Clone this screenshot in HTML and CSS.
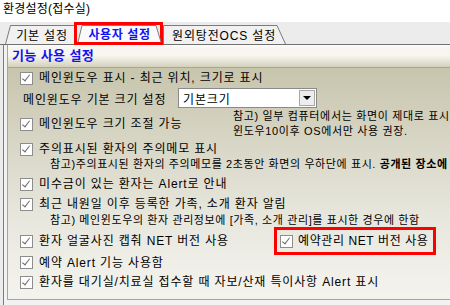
FILE: index.html
```html
<!DOCTYPE html>
<html lang="ko">
<head>
    <meta charset="UTF-8">
    <meta name="viewport" content="width=device-width, initial-scale=1.0">
    <title>환경설정(접수실)</title>
    <link rel="stylesheet" href="styles.css">
</head>
<body>
<div class="title">환경설정(접수실)</div>

<div class="tabs">
    <div class="tab tab-first">
        <svg class="tab-shape" viewBox="0 0 72 19" preserveAspectRatio="none"><path d="M0.5 19 L5.5 0.5 L72 0.5 L72 19"/></svg>
        <span>기본 설정</span>
    </div>
    <div class="tab-mark">
        <div class="tab tab-active">
            <svg class="tab-shape" viewBox="0 0 83 17" preserveAspectRatio="none"><path d="M1 17 L5 0.5 L79 0.5 L84 17"/></svg>
            <span>사용자 설정</span>
        </div>
    </div>
    <div class="tab tab-last">
        <svg class="tab-shape" viewBox="0 0 123 19" preserveAspectRatio="none"><path d="M0.5 19 L0.5 0.5 L114 0.5 L122.5 19"/></svg>
        <span>원외탕전OCS 설정</span>
    </div>
</div>

<div class="page">
    <div class="pane">
        <div class="group">
            <div class="group-head">기능 사용 설정</div>
            <div class="group-body">
                <div class="row r1"><span class="check"></span><span>메인윈도우 표시 - 최근 위치, 크기로 표시</span></div>

                <div class="size-row">
                    <span class="size-label">메인윈도우 기본 크기 설정</span>
                    <div class="select"><span class="select-text">기본크기</span><span class="select-btn"></span></div>
                </div>

                <div class="split-row r3">
                    <div class="row"><span class="check"></span><span>메인윈도우 크기 조절 가능</span></div>
                    <div class="side-note">참고) 일부 컴퓨터에서는 화면이 제대로 표시<br>윈도우10이후 OS에서만 사용 권장.</div>
                </div>

                <div class="row r4"><span class="check"></span><span>주의표시된 환자의 주의메모 표시</span></div>
                <div class="note">참고)주의표시된 환자의 주의메모를 2초동안 화면의 우하단에 표시. <b>공개된 장소에</b></div>

                <div class="row r6"><span class="check"></span><span>미수금이 있는 환자는 Alert로 안내</span></div>
                <div class="row"><span class="check"></span><span>최근 내원일 이후 등록한 가족, 소개 환자 알림</span></div>
                <div class="note">참고) 메인윈도우의 환자 관리정보에 [가족, 소개 관리]를 표시한 경우에 한함</div>

                <div class="split-row r9">
                    <div class="row"><span class="check"></span><span>환자 얼굴사진 캡춰 NET 버전 사용</span></div>
                    <div class="row mark"><span class="check"></span><span>예약관리 NET 버전 사용</span></div>
                </div>

                <div class="row r10"><span class="check"></span><span>예약 Alert 기능 사용함</span></div>
                <div class="row r11"><span class="check"></span><span>환자를 대기실/치료실 접수할 때 자보/산재 특이사항 Alert 표시</span></div>
            </div>
        </div>
    </div>
</div>
</body>
</html>
```

FILE: styles.css
```css
html,
body {
margin: 0;
padding: 0;
width: 450px;
height: 305px;
overflow: hidden;
background: #fff;
font-family: "Liberation Sans", "Noto Sans CJK KR", sans-serif;
font-size: 12px;
letter-spacing: 0.85px;
color: #000;
white-space: nowrap;
}

.title {
height: 22px;
line-height: 16px;
padding: 1px 0 0 3px;
box-sizing: border-box;
letter-spacing: 0.2px;
}

/* tab strip */
.tabs {
display: flex;
align-items: flex-end;
height: 22px;
padding-left: 5px;
background: #ececec;
border-bottom: 1px solid #707070;
}

.tab {
position: relative;
display: flex;
align-items: center;
height: 19px;
box-sizing: border-box;
}

.tab span {
position: relative;
}

.tab-shape {
position: absolute;
left: 0;
top: 0;
width: 100%;
height: 100%;
overflow: visible;
}

.tab-shape path {
fill: #f1f1f1;
stroke: #7b7b7b;
stroke-width: 1;
vector-effect: non-scaling-stroke;
}

.tab-first {
width: 72px;
justify-content: center;
padding-left: 2px;
}

.tab-mark {
position: relative;
z-index: 2;
margin-left: -3px;
margin-bottom: -1px;
width: 89px;
height: 23px;
box-sizing: border-box;
border: 3px solid #ff0000;
background: #ececec;
}

.tab-active {
height: 17px;
justify-content: center;
padding-left: 2px;
color: #1212f2;
font-weight: bold;
letter-spacing: 0.6px;
}

.tab-active .tab-shape path {
fill: #fafafa;
}

.tab-last {
width: 123px;
padding-left: 9px;
}

/* page + group box */
.page {
background: #ececec;
padding-left: 3px;
}

.pane {
border-left: 1px solid #7c7c7c;
padding-left: 3px;
padding-bottom: 6px;
background: #f2f2f2;
}

.group {
border-left: 1px solid #a4a4a4;
border-bottom: 1px solid #a4a4a4;
}

.group-head {
height: 22px;
line-height: 22px;
padding-left: 4px;
border-bottom: 1px solid #a9a793;
background: linear-gradient(#fdfdfb 0, #f7f6f0 3px, #f6f5ee 11px, #d3d0bc 22px);
color: #1212f2;
font-weight: bold;
font-size: 13px;
letter-spacing: 0.4px;
}

.group-body {
padding: 0 0 7px 12px;
background: linear-gradient(#c8c5ad, #d9d7c7 35%, #e8e7de 65%, #f4f3ee);
}

.row {
display: flex;
align-items: center;
gap: 6px;
height: 20px;
line-height: 14px;
}

.check {
position: relative;
flex: none;
width: 13px;
height: 13px;
box-sizing: border-box;
border: 1px solid #8d8d8d;
background: #fff;
}

.check::after {
content: "";
position: absolute;
left: 3px;
top: 0px;
width: 3px;
height: 7px;
border: solid #6b6b6b;
border-width: 0 1.5px 1.5px 0;
transform: rotate(38deg);
}

.size-row {
display: grid;
grid-template-columns: 158px 139px;
align-items: center;
height: 20px;
}

.size-label {
padding-left: 3px;
}

.select {
display: flex;
align-items: center;
height: 20px;
box-sizing: border-box;
border: 1px solid #8a8a8a;
background: #fff;
}

.select-text {
flex: 1;
padding-left: 4px;
}

.select-btn {
position: relative;
width: 16px;
height: 16px;
margin-right: 1px;
box-sizing: border-box;
border: 1px solid #a8a8a8;
background: #ededed;
}

.select-btn::after {
content: "";
position: absolute;
left: 3px;
top: 5px;
border-left: 4px solid transparent;
border-right: 4px solid transparent;
border-top: 4px solid #000;
}

.split-row {
display: grid;
align-items: center;
}

.r3 {
grid-template-columns: 213px auto;
height: 32px;
}

.side-note {
font-size: 11px;
line-height: 15px;
letter-spacing: 0.65px;
}

.r4 {
height: 18px;
}

.note {
height: 12px;
line-height: 12px;
padding-left: 30px;
font-size: 11px;
letter-spacing: 0.6px;
}

.r6 {
margin-top: 4px;
}

.r9 {
grid-template-columns: 254px auto;
height: 28px;
margin-top: 1px;
}

.mark {
width: 162px;
height: 28px;
box-sizing: border-box;
border: 3px solid #ff0000;
padding-left: 3px;
gap: 5px;
letter-spacing: 0.6px;
}

.r10 {
height: 15px;
}

.r11 {
margin-top: 2px;
}
```
